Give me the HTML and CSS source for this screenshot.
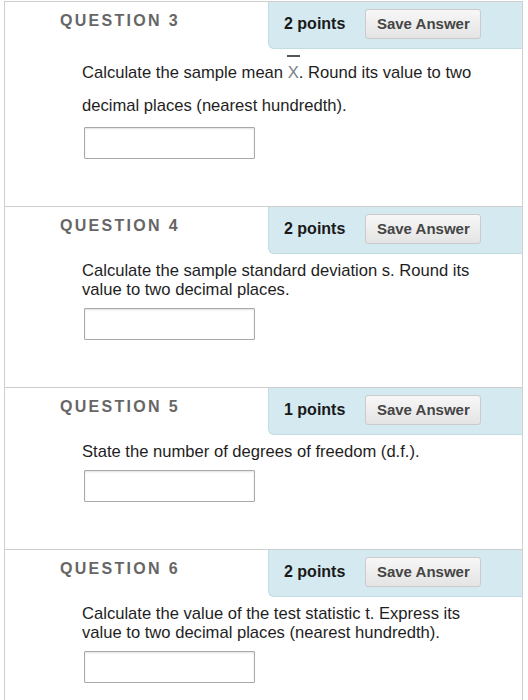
FILE: index.html
```html
<!DOCTYPE html>
<html lang="en">
  <head>
    <meta charset="UTF-8" />
    <meta name="viewport" content="width=device-width, initial-scale=1.0" />
    <title>Questions</title>
    <link rel="stylesheet" href="styles.css">
  </head>
  <body>
    <div class="quiz">
      <div class="question">
        <div class="q-head">
          <h3 class="q-label">QUESTION 3</h3>
          <div class="q-points">
            <span class="pts">2 points</span>
            <button class="save">Save Answer</button>
          </div>
        </div>
        <div class="q-body">
          <p class="q-text tall">Calculate the sample mean <span class="xbar">X</span>. Round its value to two decimal places (nearest hundredth).</p>
          <input class="answer first" type="text" />
        </div>
      </div>

      <div class="question">
        <div class="q-head">
          <h3 class="q-label">QUESTION 4</h3>
          <div class="q-points">
            <span class="pts">2 points</span>
            <button class="save">Save Answer</button>
          </div>
        </div>
        <div class="q-body">
          <p class="q-text">Calculate the sample standard deviation s. Round its value to two decimal places.</p>
          <input class="answer" type="text" />
        </div>
      </div>

      <div class="question">
        <div class="q-head">
          <h3 class="q-label">QUESTION 5</h3>
          <div class="q-points">
            <span class="pts">1 points</span>
            <button class="save">Save Answer</button>
          </div>
        </div>
        <div class="q-body">
          <p class="q-text">State the number of degrees of freedom (d.f.).</p>
          <input class="answer" type="text" />
        </div>
      </div>

      <div class="question">
        <div class="q-head">
          <h3 class="q-label">QUESTION 6</h3>
          <div class="q-points">
            <span class="pts">2 points</span>
            <button class="save">Save Answer</button>
          </div>
        </div>
        <div class="q-body">
          <p class="q-text">Calculate the value of the test statistic t. Express its value to two decimal places (nearest hundredth).</p>
          <input class="answer" type="text" />
        </div>
      </div>
    </div>
  </body>
</html>
```

FILE: styles.css
```css
body {
  margin: 0;
  padding-top: 1px;
  background-color: #fff;
  font-family: "Liberation Sans", Arial, sans-serif;
  color: #1e1e1e;
}

.quiz {
  margin-left: 4px;
  width: 517px;
  border-left: 1px solid #cfcfcf;
  border-right: 1px solid #cfcfcf;
}

.question {
  border-top: 1px solid #cdcdcd;
}

.q-head {
  display: flex;
  align-items: flex-start;
  height: 47px;
}
.q-label {
  flex: 1;
  margin: 0;
  padding: 9px 0 0 55px;
  font-size: 16px;
  line-height: 19px;
  letter-spacing: 2.3px;
  font-weight: bold;
  color: #666;
}
.q-points {
  box-sizing: border-box;
  width: 254px;
  height: 47px;
  display: flex;
  align-items: center;
  gap: 20px;
  padding: 0 0 3px 15px;
  background-color: #d4e9f0;
  border-left: 1px solid #c3dbe3;
  border-bottom: 1px solid #c3dbe3;
  border-bottom-left-radius: 6px;
}
.pts {
  font-size: 16px;
  font-weight: bold;
  color: #1a1a1a;
}
.save {
  width: 116px;
  height: 30px;
  padding: 0;
  font-family: "Liberation Sans", Arial, sans-serif;
  font-size: 15px;
  font-weight: bold;
  color: #454545;
  background: linear-gradient(#f7f7f7, #e4e4e4);
  border: 1px solid #cbcbcb;
  border-radius: 3px;
}

.q-body {
  padding: 7px 0 47px 77px;
}
.q-text {
  margin: 0;
  max-width: 410px;
  font-size: 16.6px;
  line-height: 19px;
}
.q-text.tall {
  line-height: 33px;
}
.xbar {
  position: relative;
  color: #7a7f88;
}
.xbar::before {
  content: "";
  position: absolute;
  left: -1px;
  right: -1px;
  top: -8px;
  border-top: 2px solid #555;
}

.answer {
  display: block;
  box-sizing: border-box;
  width: 171px;
  height: 32px;
  margin: 9px 0 0 2px;
  border: 1px solid #a9a9a9;
  border-radius: 1px;
  box-shadow: inset 0 1px 2px rgba(0, 0, 0, 0.12);
  background: #fff;
}
.answer.first {
  margin-top: 5px;
}
```
